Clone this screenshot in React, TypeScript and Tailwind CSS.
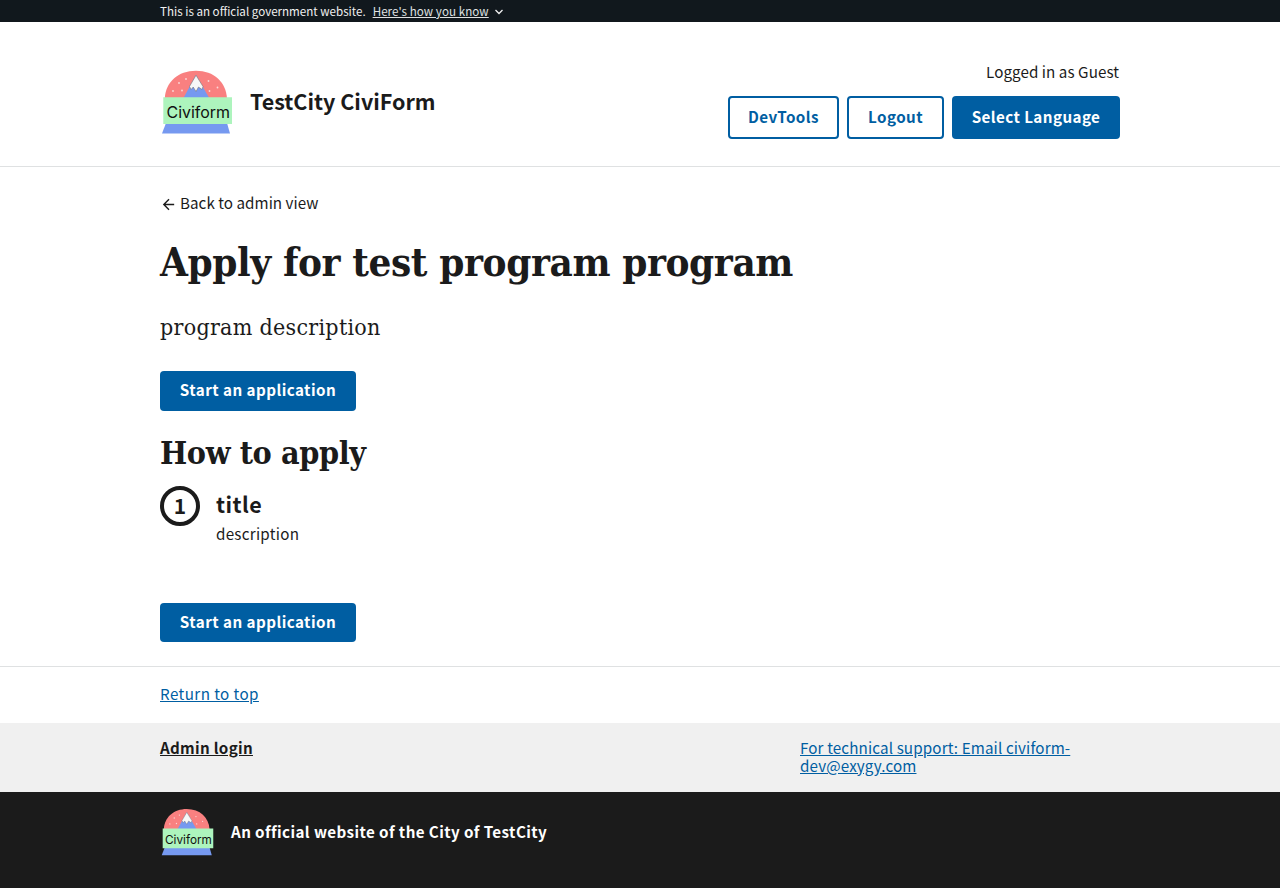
import React from "react";

function Logo({ className }: { className: string }) {
  return (
    <svg viewBox="0 0 72 64" className={className} aria-label="Civiform">
      <path d="M3.800 28.500C4.500 12 17 .7 35 .7S65 12 66 28.500z" fill="#f98080" />
      <path d="M22.200 28.500 35 5l13.500 23.500z" fill="#7699f0" />
      <path d="M28.500 16.500 35 5.300l7 11.200-1 3-3.500-2.500-2.500 4.500-2.800-4.500-2 2.500z" fill="#f7f7f7" stroke="#666" strokeWidth=".5" />
      <g fill="#fbd8d8">
        <circle cx="18" cy="13" r=".9" /><circle cx="25" cy="9" r=".9" />
        <circle cx="21" cy="20.500" r=".9" /><circle cx="12" cy="21" r=".9" />
        <circle cx="47.500" cy="11" r=".9" /><circle cx="56.500" cy="17.500" r=".9" />
        <circle cx="48.500" cy="21" r=".9" />
      </g>
      <path d="M5 53h61l3 10.500H1z" fill="#7699f0" />
      <path d="M2.300 27.300H71V54H2.300z" fill="#adf4bd" />
      <text x="5.500" y="47.800" textLength="63.500" lengthAdjust="spacingAndGlyphs" className="fill-[#101010] font-['Inter'] text-[16px]">Civiform</text>
    </svg>
  );
}

function StartButton({ className }: { className: string }) {
  return (
    <button className={`flex w-49 items-center justify-center rounded bg-[#005ea2] pb-0.5 text-[15.200px] leading-none font-bold tracking-[0.450px] whitespace-nowrap text-white ${className}`}>
      Start an application
    </button>
  );
}

export default function App() {
  return (
    <div className="flex h-[888px] flex-col overflow-hidden bg-white font-['Noto_Sans_CJK_SC',sans-serif] text-[15.200px] leading-[18px] text-[#1b1b1b]">
      <div className="flex h-[22px] items-center bg-[#11181d] px-40 text-[11.600px] leading-[22px] text-[#f0f0f0]">
        <span>This is an official government website.</span>
        <a className="ml-[7px] tracking-[0.060px] text-[#dfe1e2] underline underline-offset-1">Here's how you know</a>
        <svg viewBox="0 0 10 10" className="mt-px ml-[5px] size-2.5" fill="none" stroke="#f0f0f0" strokeWidth="1.300"><path d="m1.500 3 3.500 3.500L8.500 3" /></svg>
      </div>
      <header className="flex h-[145px] justify-between border-b border-[#dfe1e2] px-40">
        <div className="flex items-start pt-12">
          <Logo className="ml-px h-16 w-[72px]" />
          <h1 className="mt-[15px] ml-[17px] text-[21.500px] leading-8 font-bold">TestCity CiviForm</h1>
        </div>
        <div className="flex flex-col items-end pt-10">
          <p className="mr-px tracking-[0.060px]">Logged in as Guest</p>
          <div className="mt-4 flex h-[43px] gap-2 font-bold tracking-[0.420px]">
            <button className="flex w-[111px] items-center justify-center rounded border-2 border-[#005ea2] pb-[3px] text-[#005ea2]">DevTools</button>
            <button className="flex w-[97px] items-center justify-center rounded border-2 border-[#005ea2] pb-[3px] text-[#005ea2]">Logout</button>
            <button className="flex w-[168px] items-center justify-center rounded bg-[#005ea2] pb-[3px] text-white">Select Language</button>
          </div>
        </div>
      </header>
      <main className="flex h-[499px] flex-col px-40 pt-[26px]">
        <a className="flex h-[18px] items-center tracking-[0.040px]">
          <svg viewBox="0 0 24 24" className="mt-1 mr-[3px] size-[17px]" fill="currentColor"><path d="M20 11H7.830l5.590-5.590L12 4l-8 8 8 8 1.410-1.410L7.830 13H20v-2z" /></svg>
          Back to admin view
        </a>
        <h1 className="mt-[23px] h-14 font-['DejaVu_Serif_Condensed','DejaVu_Serif',serif] text-[40px] leading-[56px] font-bold tracking-[-0.400px] whitespace-nowrap">Apply for test program program</h1>
        <p className="mt-[21px] h-8 font-['DejaVu_Serif_Condensed','DejaVu_Serif',serif] text-[23px] leading-8 tracking-[0.280px]">program description</p>
        <StartButton className="mt-[28px] h-10" />
        <h2 className="mt-[22px] h-10 font-['DejaVu_Serif_Condensed','DejaVu_Serif',serif] text-[32px] leading-10 font-bold tracking-[-0.390px]">How to apply</h2>
        <div className="mt-[13px] flex h-[68px]">
          <div className="flex size-10 items-center justify-center rounded-full border-4 border-[#1b1b1b] pb-0.5 text-[21px] leading-none font-bold">1</div>
          <div className="ml-4">
            <h3 className="mt-[5px] text-[21.500px] leading-[26px] font-bold tracking-[0.450px]">title</h3>
            <p className="mt-[7px] tracking-[0.270px]">description</p>
          </div>
        </div>
        <StartButton className="mt-[49px] h-[39px]" />
      </main>
      <footer>
        <div className="h-[57px] border-t border-[#dfe1e2] px-40 pt-[17px]">
          <a className="tracking-[0.420px] text-[#005ea2] underline underline-offset-1">Return to top</a>
        </div>
        <div className="flex h-[69px] bg-[#f0f0f0] px-40 pt-[15px]">
          <a className="w-160 font-bold tracking-[0.300px] underline underline-offset-1">Admin login</a>
          <a className="tracking-[0.130px] text-[#005ea2] underline underline-offset-1">For technical support: Email civiform-<br />dev@exygy.com</a>
        </div>
        <div className="flex h-24 items-start bg-[#1b1b1b] px-40 pt-4">
          <Logo className="ml-px h-12 w-[53px]" />
          <p className="mt-[14px] ml-[17px] font-bold tracking-[0.400px] text-white">An official website of the City of TestCity</p>
        </div>
      </footer>
    </div>
  );
}
